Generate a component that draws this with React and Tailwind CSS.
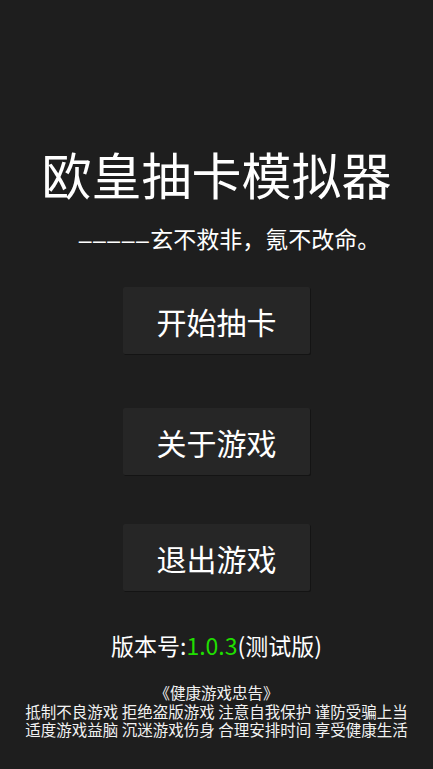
const cjk = "font-['Noto_Sans_CJK_SC','Noto_Sans',sans-serif]"

const menuItems = ["开始抽卡", "关于游戏", "退出游戏"]
const gaps = ["mt-[35px]", "mt-[54px]", "mt-[49px]"]

function MenuButton({ label, className }) {
  return (
    <button
      type="button"
      className={`${className} flex h-[67px] w-[187px] items-center justify-center rounded-[2px] bg-[#262626] text-[30px] leading-none text-white shadow-[1px_1px_0_#141414]`}
    >
      {label}
    </button>
  )
}

export default function App() {
  return (
    <div className={`${cjk} flex min-h-[769px] w-full flex-col items-center bg-[#1e1e1e] pt-[148px] text-white`}>
      <h1 className="text-[50px] leading-none font-normal">欧皇抽卡模拟器</h1>
      <p className="mt-[29px] pl-[26px] text-[23px] leading-[23px]">
        <span className="font-['Liberation_Sans',sans-serif] text-[23px] tracking-[1.5px]">–––––</span>
        玄不救非，氪不改命。
      </p>

      {menuItems.map((label, i) => (
        <MenuButton key={label} label={label} className={gaps[i]} />
      ))}

      <p className="mt-[43px] text-[23px] leading-[23px]">
        版本号:<span className="text-[#20df00]">1.0.3</span>(测试版)
      </p>

      <div className="mt-[26px] text-center text-[15.5px] leading-[18.5px] text-[#f2f2f2]">
        <p>《健康游戏忠告》</p>
        <p>抵制不良游戏 拒绝盗版游戏 注意自我保护 谨防受骗上当</p>
        <p>适度游戏益脑 沉迷游戏伤身 合理安排时间 享受健康生活</p>
      </div>
    </div>
  )
}
